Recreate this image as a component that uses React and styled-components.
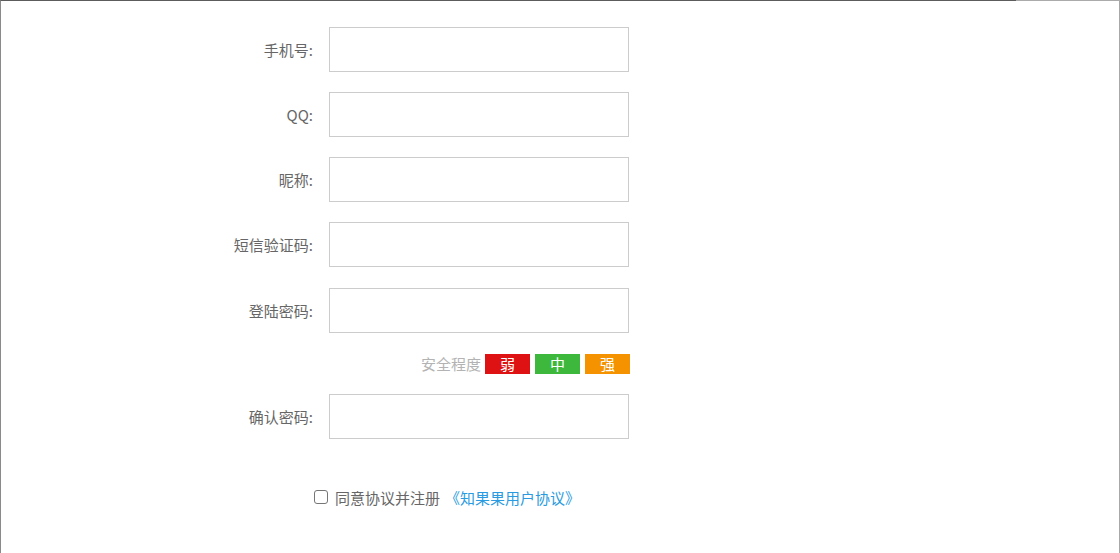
import React from 'react';
import styled, { createGlobalStyle } from 'styled-components';

const Global = createGlobalStyle`
  html, body { margin: 0; padding: 0; background: #fff; }
  body {
    font-family: "Microsoft YaHei", "Noto Sans CJK SC", "Noto Sans", sans-serif;
    font-size: 15px;
    color: #666;
  }
  * { box-sizing: border-box; }
`

const Frame = styled.div`
  position: relative;
  min-height: 100vh;
  border-top: 1px solid #5c5c5c;
  border-left: 1px solid #8a8a8a;
  border-right: 1px solid #a8a8a8;
  padding-top: 26px;
  &::after {
    content: "";
    position: absolute;
    top: -1px;
    right: -1px;
    width: 104px;
    height: 1px;
    background: #ababab;
  }
`

const Form = styled.form`
  display: flex;
  flex-direction: column;
  margin-left: 192px;
`

const Row = styled.div`
  display: flex;
  align-items: center;
  height: 45px;
  margin-bottom: ${p => p.gap}px;
`

const Label = styled.label`
  width: 120px;
  text-align: right;
  color: #666;
  line-height: 20px;
`

const Input = styled.input`
  margin-left: 16px;
  width: 300px;
  height: 45px;
  border: 1px solid #ccc;
  outline: none;
  padding: 0 2px;
  font-size: 15px;
  font-family: inherit;
  caret-color: #000;
`

const Strength = styled.div`
  display: flex;
  align-items: center;
  justify-content: flex-end;
  width: 437px;
  height: 20px;
  margin-bottom: 20px;
`

const StrengthText = styled.span`
  color: #b3b3b3;
  margin-right: 4px;
  line-height: 20px;
`

const Level = styled.span`
  width: 45px;
  height: 20px;
  line-height: 20px;
  text-align: center;
  color: #fff;
  background: ${p => p.color};
  margin-left: ${p => p.first ? 0 : 5}px;
`

const Agree = styled.div`
  display: flex;
  align-items: center;
  margin-top: 46px;
  padding-left: 121px;
  height: 24px;
`

const Check = styled.input`
  appearance: none;
  width: 14px;
  height: 14px;
  margin: 0 7px 0 0;
  border: 1px solid #767676;
  border-radius: 3px;
  background: #fff;
`

const Link = styled.a`
  color: #2a9be0;
  text-decoration: none;
  margin-left: 5px;
`

const fields = [
  { label: '手机号:', type: 'text', gap: 20, focus: true },
  { label: 'QQ:', type: 'text', gap: 20 },
  { label: '昵称:', type: 'text', gap: 20 },
  { label: '短信验证码:', type: 'text', gap: 21 },
  { label: '登陆密码:', type: 'password', gap: 21 },
];

const App = () => {
  return (
    <Frame>
      <Global />
      <Form onSubmit={e => e.preventDefault()}>
        {fields.map(f => (
          <Row key={f.label} gap={f.gap}>
            <Label>{f.label}</Label>
            <Input type={f.type} autoFocus={f.focus} />
          </Row>
        ))}
        <Strength>
          <StrengthText>安全程度</StrengthText>
          <Level first color="#de1212">弱</Level>
          <Level color="#3db83d">中</Level>
          <Level color="#f59200">强</Level>
        </Strength>
        <Row gap={0}>
          <Label>确认密码:</Label>
          <Input type="password" />
        </Row>
        <Agree>
          <Check type="checkbox" />
          <span>同意协议并注册</span>
          <Link href="#">《知果果用户协议》</Link>
        </Agree>
      </Form>
    </Frame>
  );
}

export default App;
